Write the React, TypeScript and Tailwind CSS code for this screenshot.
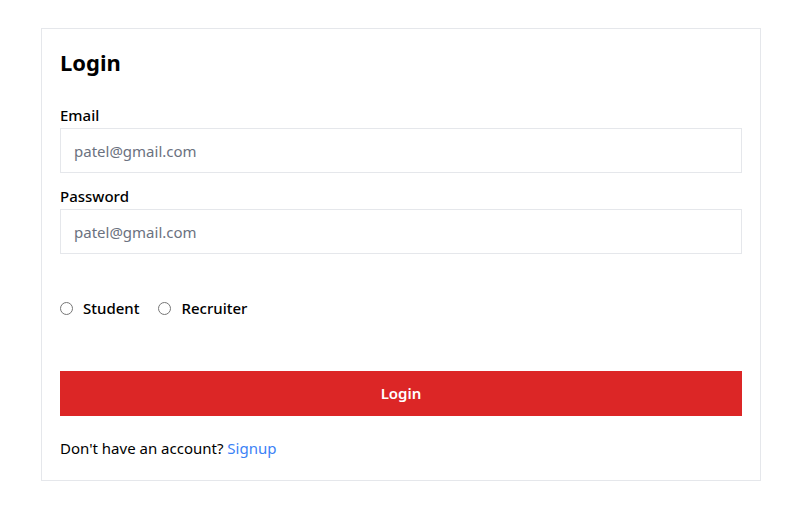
import React from 'react';

export default function App() {
  return (
    <div className="min-h-screen bg-white pt-[28px] font-['Noto_Sans',sans-serif] text-black">
      <form className="ml-[41px] w-[720px] border border-gray-200 px-[18px] pt-[17px] pb-[22px]">
        <h1 className="text-[22px] leading-8 font-bold">Login</h1>

        <div className="mt-[27px]">
          <label className="block text-[15px] leading-5 font-medium">Email</label>
          <input
            type="email"
            placeholder="patel@gmail.com"
            className="mt-[3px] h-[45px] w-full border border-[#e5e7eb] px-[13px] text-[15px] outline-none placeholder:text-[#6b7280]"
          />
        </div>

        <div className="mt-[13px]">
          <label className="block text-[15px] leading-5 font-medium">Password</label>
          <input
            type="password"
            placeholder="patel@gmail.com"
            className="mt-[3px] h-[45px] w-full border border-[#e5e7eb] px-[13px] text-[15px] outline-none placeholder:text-[#6b7280]"
          />
        </div>

        <div className="mt-[44px] flex items-center gap-[19px]">
          <label className="flex items-center gap-[10px] text-[15px] leading-5 font-medium">
            <input type="radio" name="role" className="m-0 h-[13px] w-[13px]" />
            Student
          </label>
          <label className="flex items-center gap-[10px] text-[15px] leading-5 font-medium">
            <input type="radio" name="role" className="m-0 h-[13px] w-[13px]" />
            Recruiter
          </label>
        </div>

        <button
          type="button"
          className="mt-[53px] h-[45px] w-full bg-[#dc2626] text-[15px] font-semibold text-white"
        >
          Login
        </button>

        <p className="mt-[22px] text-[15px] leading-5">
          Don't have an account? <a className="text-[#3b82f6]">Signup</a>
        </p>
      </form>
    </div>
  );
}
